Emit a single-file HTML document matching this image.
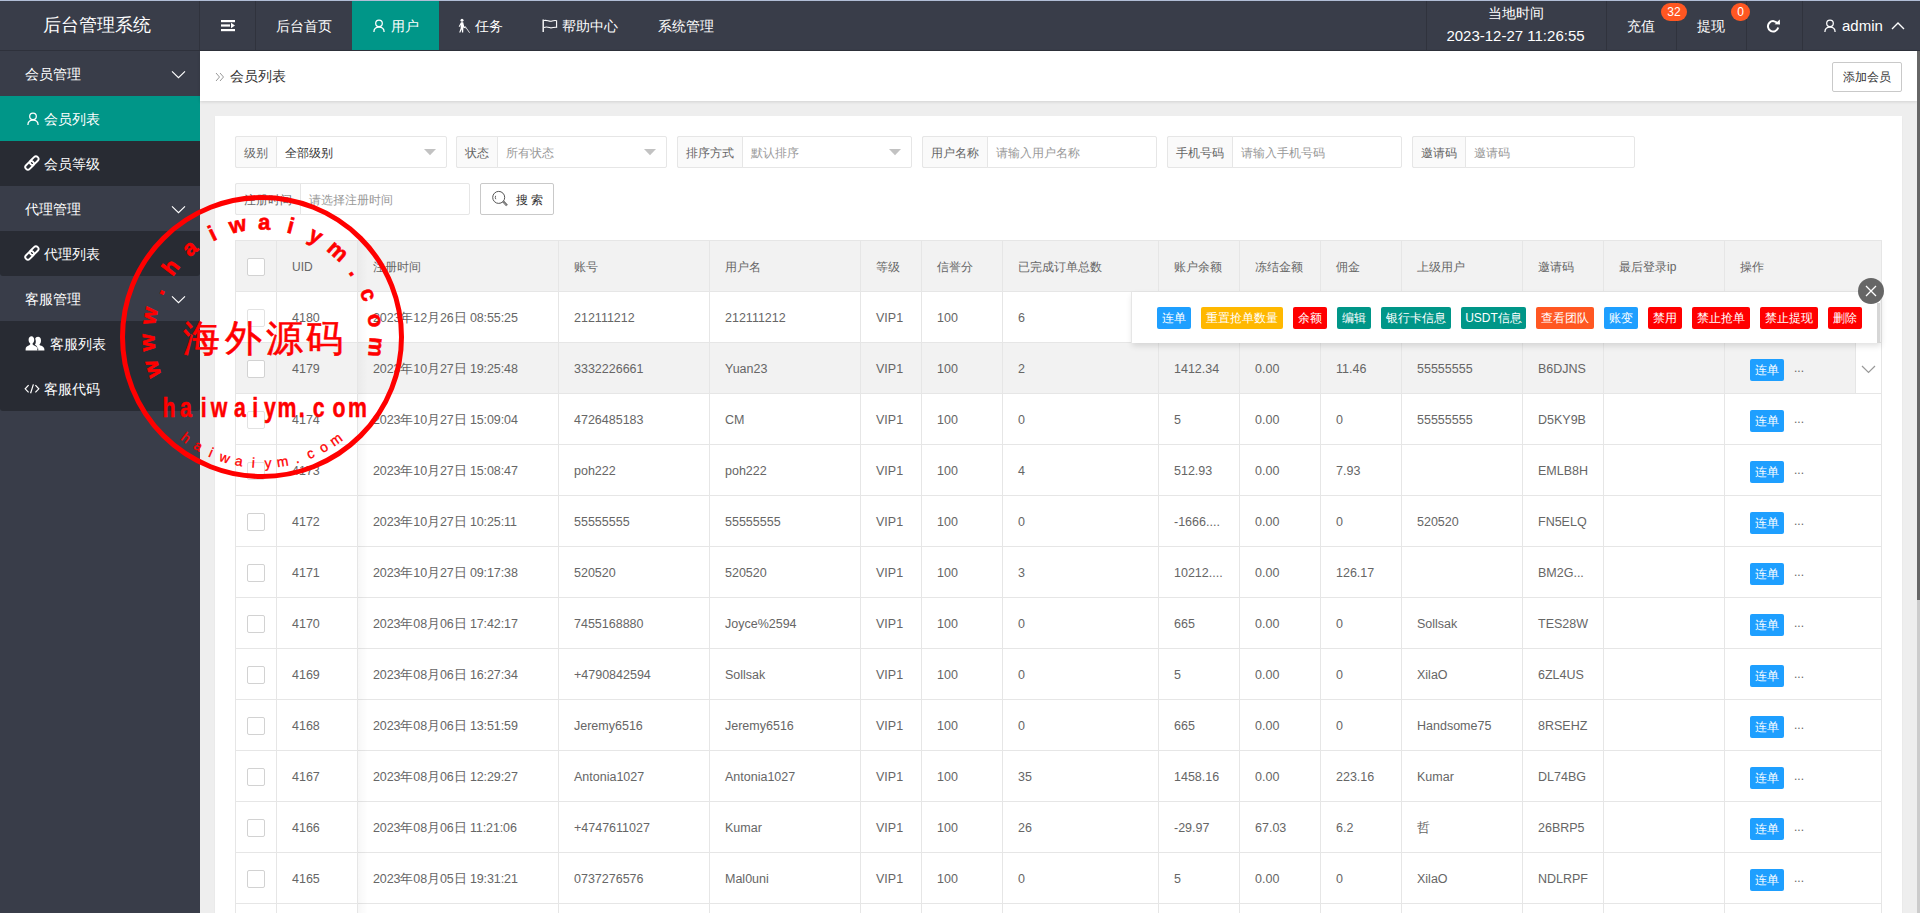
<!DOCTYPE html><html><head><meta charset="utf-8"><style>
html,body{margin:0;padding:0;} body{width:1920px;height:913px;overflow:hidden;position:relative;background:#eeeeee;font-family:"Liberation Sans", sans-serif;} div,svg{box-sizing:border-box;}
</style></head><body>
<div style="position:absolute;left:0px;top:0px;width:1920px;height:51px;background:#393D49;"></div>
<div style="position:absolute;left:0px;top:0px;width:1920px;height:1px;background:#b1bdd6;"></div>
<div style="position:absolute;left:0px;top:50px;width:1920px;height:1px;background:#2e313b;"></div>
<div style="position:absolute;left:199px;top:1px;width:1px;height:49px;background:#30333d;"></div>
<div style="position:absolute;left:255px;top:1px;width:1px;height:49px;background:#30333d;"></div>
<div style="position:absolute;left:1426px;top:1px;width:1px;height:49px;background:#30333d;"></div>
<div style="position:absolute;left:1606px;top:1px;width:1px;height:49px;background:#30333d;"></div>
<div style="position:absolute;left:1676px;top:1px;width:1px;height:49px;background:#30333d;"></div>
<div style="position:absolute;left:1746px;top:1px;width:1px;height:49px;background:#30333d;"></div>
<div style="position:absolute;left:1802px;top:1px;width:1px;height:49px;background:#30333d;"></div>
<div style="position:absolute;left:43px;top:13.0px;line-height:24px;font-size:18px;color:#fff;white-space:nowrap;">后台管理系统</div>
<svg style="position:absolute;left:221px;top:19px;" width="15" height="13" viewBox="0 0 15 13"><rect x="0" y="1" width="14" height="2.2" fill="#fff"/><rect x="0" y="5.4" width="9" height="2.2" fill="#fff"/><path d="M10 3.8 L14 6.5 L10 9.2 Z" fill="#fff"/><rect x="0" y="10" width="14" height="2.2" fill="#fff"/></svg>
<div style="position:absolute;left:276px;top:16.0px;line-height:20px;font-size:14px;color:#fff;white-space:nowrap;">后台首页</div>
<div style="position:absolute;left:352px;top:1px;width:87px;height:49px;background:#009688;"></div>
<svg style="position:absolute;left:373px;top:19px;" width="13" height="14" viewBox="0 0 13 14"><circle cx="6" cy="4.3" r="3.3" fill="none" stroke="#fff" stroke-width="1.25"/><path d="M0.9 13 C0.9 9.7 3.2 8.1 6 8.1 C8.8 8.1 11.1 9.7 11.1 13" fill="none" stroke="#fff" stroke-width="1.25"/></svg>
<div style="position:absolute;left:391px;top:16.0px;line-height:20px;font-size:14px;color:#fff;white-space:nowrap;">用户</div>
<svg style="position:absolute;left:457px;top:18px;" width="14" height="16" viewBox="0 0 14 16"><circle cx="5" cy="2.2" r="1.5" fill="#fff"/><path d="M4 4.3 L6.2 4.3 L7.2 8.6 L8.8 9.6 L8.4 10.4 L6.4 9.4 L6.2 14.6 L5 14.6 L4.7 11.2 L3.4 14.6 L2.2 14.6 L3.7 10 L3.5 6.8 L2.6 9 L1.7 8.6 Z" fill="#fff"/><path d="M8 8.2 L12.6 14.8" stroke="#fff" stroke-width="0.8"/></svg>
<div style="position:absolute;left:475px;top:16.0px;line-height:20px;font-size:14px;color:#fff;white-space:nowrap;">任务</div>
<svg style="position:absolute;left:542px;top:19px;" width="16" height="14" viewBox="0 0 16 14"><path d="M1.2 0.5 L1.2 13" stroke="#fff" stroke-width="1.4"/><path d="M2 1.6 C5 0.4 7 3.2 10 2.1 C12 1.4 13.5 1.5 14.6 1.7 L14.6 8.3 C12 7.6 10 9.6 7.5 8.6 C5 7.6 3.5 7.8 2 8.4" fill="none" stroke="#fff" stroke-width="1.1"/></svg>
<div style="position:absolute;left:562px;top:16.0px;line-height:20px;font-size:14px;color:#fff;white-space:nowrap;">帮助中心</div>
<div style="position:absolute;left:658px;top:16.0px;line-height:20px;font-size:14px;color:#fff;white-space:nowrap;">系统管理</div>
<div style="position:absolute;left:1366.0px;top:3.0px;width:300px;text-align:center;line-height:20px;font-size:14px;color:#fff;white-space:nowrap;">当地时间</div>
<div style="position:absolute;left:1365.5px;top:26.0px;width:300px;text-align:center;line-height:20px;font-size:15px;color:#fff;white-space:nowrap;">2023-12-27 11:26:55</div>
<div style="position:absolute;left:1627px;top:16.0px;line-height:20px;font-size:14px;color:#fff;white-space:nowrap;">充值</div>
<div style="position:absolute;left:1661px;top:3px;width:26px;height:18px;background:#FF5722;border-radius:9px;"></div>
<div style="position:absolute;left:1661.0px;top:5.0px;width:26px;text-align:center;line-height:14px;font-size:12px;color:#fff;white-space:nowrap;">32</div>
<div style="position:absolute;left:1697px;top:16.0px;line-height:20px;font-size:14px;color:#fff;white-space:nowrap;">提现</div>
<div style="position:absolute;left:1731px;top:3px;width:19px;height:18px;background:#FF5722;border-radius:9px;"></div>
<div style="position:absolute;left:1731.0px;top:5.0px;width:19px;text-align:center;line-height:14px;font-size:12px;color:#fff;white-space:nowrap;">0</div>
<svg style="position:absolute;left:1766px;top:19px;" width="16" height="14" viewBox="0 0 16 14"><path d="M11.6 4.6 A5.2 5.2 0 1 0 12.2 8.6" fill="none" stroke="#fff" stroke-width="2"/><path d="M8.6 5.2 L14 5.6 L13.8 0.4 Z" fill="#fff"/></svg>
<svg style="position:absolute;left:1824px;top:19px;" width="13" height="14" viewBox="0 0 13 14"><circle cx="6" cy="4.3" r="3.3" fill="none" stroke="#fff" stroke-width="1.25"/><path d="M0.9 13 C0.9 9.7 3.2 8.1 6 8.1 C8.8 8.1 11.1 9.7 11.1 13" fill="none" stroke="#fff" stroke-width="1.25"/></svg>
<div style="position:absolute;left:1842px;top:16.0px;line-height:20px;font-size:15px;color:#fff;white-space:nowrap;">admin</div>
<svg style="position:absolute;left:1891px;top:21px;" width="14" height="9" viewBox="0 0 14 9"><path d="M1 8 L7 2 L13 8" fill="none" stroke="#fff" stroke-width="1.4"/></svg>
<div style="position:absolute;left:0px;top:51px;width:200px;height:862px;background:#393D49;"></div>
<div style="position:absolute;left:25px;top:64.0px;line-height:20px;font-size:14px;color:#fff;white-space:nowrap;">会员管理</div>
<svg style="position:absolute;left:171px;top:70px;" width="15" height="9" viewBox="0 0 15 9"><path d="M1 1.3 L7.5 7.6 L14 1.3" fill="none" stroke="#fff" stroke-width="1.15"/></svg>
<div style="position:absolute;left:0px;top:96px;width:200px;height:45px;background:#009688;"></div>
<svg style="position:absolute;left:27px;top:112px;" width="13" height="14" viewBox="0 0 13 14"><circle cx="6" cy="4.3" r="3.3" fill="none" stroke="#fff" stroke-width="1.25"/><path d="M0.9 13 C0.9 9.7 3.2 8.1 6 8.1 C8.8 8.1 11.1 9.7 11.1 13" fill="none" stroke="#fff" stroke-width="1.25"/></svg>
<div style="position:absolute;left:44px;top:109.0px;line-height:20px;font-size:14px;color:#fff;white-space:nowrap;">会员列表</div>
<div style="position:absolute;left:0px;top:141px;width:200px;height:45px;background:#282B33;"></div>
<svg style="position:absolute;left:24px;top:155px;" width="16" height="16" viewBox="0 0 16 16"><g fill="none" stroke="#fff" stroke-width="1.9"><rect x="-5" y="-2.6" width="10" height="5.2" rx="2.6" transform="translate(10.2 5.6) rotate(-45)"/><rect x="-5" y="-2.6" width="10" height="5.2" rx="2.6" transform="translate(5.6 10.4) rotate(-45)"/></g></svg>
<div style="position:absolute;left:44px;top:154.0px;line-height:20px;font-size:14px;color:#fff;white-space:nowrap;">会员等级</div>
<div style="position:absolute;left:25px;top:199.0px;line-height:20px;font-size:14px;color:#fff;white-space:nowrap;">代理管理</div>
<svg style="position:absolute;left:171px;top:205px;" width="15" height="9" viewBox="0 0 15 9"><path d="M1 1.3 L7.5 7.6 L14 1.3" fill="none" stroke="#fff" stroke-width="1.15"/></svg>
<div style="position:absolute;left:0px;top:231px;width:200px;height:45px;background:#282B33;border-radius:0 0 3px 3px;"></div>
<svg style="position:absolute;left:24px;top:245px;" width="16" height="16" viewBox="0 0 16 16"><g fill="none" stroke="#fff" stroke-width="1.9"><rect x="-5" y="-2.6" width="10" height="5.2" rx="2.6" transform="translate(10.2 5.6) rotate(-45)"/><rect x="-5" y="-2.6" width="10" height="5.2" rx="2.6" transform="translate(5.6 10.4) rotate(-45)"/></g></svg>
<div style="position:absolute;left:44px;top:244.0px;line-height:20px;font-size:14px;color:#fff;white-space:nowrap;">代理列表</div>
<div style="position:absolute;left:25px;top:289.0px;line-height:20px;font-size:14px;color:#fff;white-space:nowrap;">客服管理</div>
<svg style="position:absolute;left:171px;top:295px;" width="15" height="9" viewBox="0 0 15 9"><path d="M1 1.3 L7.5 7.6 L14 1.3" fill="none" stroke="#fff" stroke-width="1.15"/></svg>
<div style="position:absolute;left:0px;top:321px;width:200px;height:90px;background:#282B33;border-radius:0 0 3px 3px;"></div>
<svg style="position:absolute;left:25px;top:336px;" width="20" height="15" viewBox="0 0 20 15"><path d="M12.6 14.6 L19.4 14.6 L19.4 13.4 C19.4 11.2 17.6 10.4 15.6 9.6 C14.8 9.3 14.4 8.8 14.6 8.2 C15.6 7.4 16 6 16 4.4 C16 2.2 14.8 0.8 13 0.8 C11.6 0.8 10.6 1.6 10.2 2.8 C10.6 3.6 10.8 4.4 10.8 5.4 C10.8 6.8 10.4 8 9.8 8.8 C11.8 9.8 12.6 11 12.6 13.2 Z" fill="#fff"/><path d="M0.6 14.6 L12.6 14.6 L12.6 13.2 C12.6 11 10.8 10 8.6 9.2 C7.8 8.9 7.4 8.4 7.6 7.6 C8.6 6.8 9.2 5.4 9.2 3.8 C9.2 1.6 7.8 0.2 6.6 0.2 C4.8 0.2 3.6 1.6 3.6 3.8 C3.6 5.4 4.2 6.8 5.2 7.6 C5.4 8.4 5 8.9 4.2 9.2 C2 10 0.6 11 0.6 13.2 Z" fill="#fff"/><path d="M12.8 14.6 L12.8 12.6" stroke="#282B33" stroke-width="0.8"/></svg>
<div style="position:absolute;left:50px;top:334.0px;line-height:20px;font-size:14px;color:#fff;white-space:nowrap;">客服列表</div>
<svg style="position:absolute;left:24px;top:384px;" width="16" height="10" viewBox="0 0 16 10"><g fill="none" stroke="#fff" stroke-width="1.2"><path d="M4.6 1.2 L1.2 4.8 L4.6 8.4"/><path d="M11.4 1.2 L14.8 4.8 L11.4 8.4"/><path d="M9.4 0.4 L6.6 9.2"/></g></svg>
<div style="position:absolute;left:44px;top:379.0px;line-height:20px;font-size:14px;color:#fff;white-space:nowrap;">客服代码</div>
<div style="position:absolute;left:200px;top:51px;width:1717px;height:50px;background:#fff;box-shadow:0 1px 3px rgba(0,0,0,.12);"></div>
<svg style="position:absolute;left:215px;top:72px;" width="10" height="10" viewBox="0 0 10 10"><g fill="none" stroke="#999" stroke-width="1"><path d="M1 1 L4.5 5 L1 9"/><path d="M5 1 L8.5 5 L5 9"/></g></svg>
<div style="position:absolute;left:230px;top:66.0px;line-height:20px;font-size:14px;color:#333;white-space:nowrap;">会员列表</div>
<div style="position:absolute;left:1832px;top:62px;width:70px;height:30px;background:#fff;border:1px solid #C9C9C9;border-radius:2px;"></div>
<div style="position:absolute;left:1832.0px;top:67.0px;width:70px;text-align:center;line-height:20px;font-size:12px;color:#333;white-space:nowrap;">添加会员</div>
<div style="position:absolute;left:215px;top:116px;width:1687px;height:800px;background:#fff;box-shadow:0 1px 2px rgba(0,0,0,.05);"></div>
<div style="position:absolute;left:235px;top:136px;width:212px;height:32px;border:1px solid #e6e6e6;border-radius:2px;background:#fff;"></div>
<div style="position:absolute;left:235px;top:136px;width:42px;height:32px;border:1px solid #e6e6e6;border-radius:2px 0 0 2px;background:#FAFAFA;"></div>
<div style="position:absolute;left:244px;top:142.5px;line-height:20px;font-size:12px;color:#666;white-space:nowrap;">级别</div>
<div style="position:absolute;left:285px;top:142.5px;line-height:20px;font-size:12px;color:#333;white-space:nowrap;">全部级别</div>
<svg style="position:absolute;left:424px;top:149.0px;" width="13" height="7" viewBox="0 0 13 7"><path d="M0 0 L12 0 L6 6.2 Z" fill="#c2c2c2"/></svg>
<div style="position:absolute;left:456px;top:136px;width:211px;height:32px;border:1px solid #e6e6e6;border-radius:2px;background:#fff;"></div>
<div style="position:absolute;left:456px;top:136px;width:42px;height:32px;border:1px solid #e6e6e6;border-radius:2px 0 0 2px;background:#FAFAFA;"></div>
<div style="position:absolute;left:465px;top:142.5px;line-height:20px;font-size:12px;color:#666;white-space:nowrap;">状态</div>
<div style="position:absolute;left:506px;top:142.5px;line-height:20px;font-size:12px;color:#999;white-space:nowrap;">所有状态</div>
<svg style="position:absolute;left:644px;top:149.0px;" width="13" height="7" viewBox="0 0 13 7"><path d="M0 0 L12 0 L6 6.2 Z" fill="#c2c2c2"/></svg>
<div style="position:absolute;left:677px;top:136px;width:235px;height:32px;border:1px solid #e6e6e6;border-radius:2px;background:#fff;"></div>
<div style="position:absolute;left:677px;top:136px;width:66px;height:32px;border:1px solid #e6e6e6;border-radius:2px 0 0 2px;background:#FAFAFA;"></div>
<div style="position:absolute;left:686px;top:142.5px;line-height:20px;font-size:12px;color:#666;white-space:nowrap;">排序方式</div>
<div style="position:absolute;left:751px;top:142.5px;line-height:20px;font-size:12px;color:#999;white-space:nowrap;">默认排序</div>
<svg style="position:absolute;left:889px;top:149.0px;" width="13" height="7" viewBox="0 0 13 7"><path d="M0 0 L12 0 L6 6.2 Z" fill="#c2c2c2"/></svg>
<div style="position:absolute;left:922px;top:136px;width:235px;height:32px;border:1px solid #e6e6e6;border-radius:2px;background:#fff;"></div>
<div style="position:absolute;left:922px;top:136px;width:66px;height:32px;border:1px solid #e6e6e6;border-radius:2px 0 0 2px;background:#FAFAFA;"></div>
<div style="position:absolute;left:931px;top:142.5px;line-height:20px;font-size:12px;color:#666;white-space:nowrap;">用户名称</div>
<div style="position:absolute;left:996px;top:142.5px;line-height:20px;font-size:12px;color:#999;white-space:nowrap;">请输入用户名称</div>
<div style="position:absolute;left:1167px;top:136px;width:235px;height:32px;border:1px solid #e6e6e6;border-radius:2px;background:#fff;"></div>
<div style="position:absolute;left:1167px;top:136px;width:66px;height:32px;border:1px solid #e6e6e6;border-radius:2px 0 0 2px;background:#FAFAFA;"></div>
<div style="position:absolute;left:1176px;top:142.5px;line-height:20px;font-size:12px;color:#666;white-space:nowrap;">手机号码</div>
<div style="position:absolute;left:1241px;top:142.5px;line-height:20px;font-size:12px;color:#999;white-space:nowrap;">请输入手机号码</div>
<div style="position:absolute;left:1412px;top:136px;width:223px;height:32px;border:1px solid #e6e6e6;border-radius:2px;background:#fff;"></div>
<div style="position:absolute;left:1412px;top:136px;width:54px;height:32px;border:1px solid #e6e6e6;border-radius:2px 0 0 2px;background:#FAFAFA;"></div>
<div style="position:absolute;left:1421px;top:142.5px;line-height:20px;font-size:12px;color:#666;white-space:nowrap;">邀请码</div>
<div style="position:absolute;left:1474px;top:142.5px;line-height:20px;font-size:12px;color:#999;white-space:nowrap;">邀请码</div>
<div style="position:absolute;left:235px;top:183px;width:235px;height:32px;border:1px solid #e6e6e6;border-radius:2px;background:#fff;"></div>
<div style="position:absolute;left:235px;top:183px;width:66px;height:32px;border:1px solid #e6e6e6;border-radius:2px 0 0 2px;background:#FAFAFA;"></div>
<div style="position:absolute;left:244px;top:189.5px;line-height:20px;font-size:12px;color:#666;white-space:nowrap;">注册时间</div>
<div style="position:absolute;left:309px;top:189.5px;line-height:20px;font-size:12px;color:#999;white-space:nowrap;">请选择注册时间</div>
<div style="position:absolute;left:480px;top:183px;width:74px;height:32px;border:1px solid #C9C9C9;border-radius:2px;background:#fff;"></div>
<svg style="position:absolute;left:491px;top:189px;" width="18" height="19" viewBox="0 0 18 19"><circle cx="7.7" cy="8.4" r="6" fill="none" stroke="#555" stroke-width="1"/><path d="M12.2 12.6 L16 16.6" stroke="#555" stroke-width="2.2"/><path d="M12.4 13 L15.8 16.4" stroke="#fff" stroke-width="0.6"/><path d="M4.6 6.8 A3.8 3.8 0 0 0 4.8 10.2" fill="none" stroke="#555" stroke-width="0.9"/></svg>
<div style="position:absolute;left:515.5px;top:190.0px;line-height:20px;font-size:12px;color:#333;white-space:nowrap;">搜</div>
<div style="position:absolute;left:531px;top:190.0px;line-height:20px;font-size:12px;color:#333;white-space:nowrap;">索</div>
<div style="position:absolute;left:235px;top:240px;width:1647px;height:51px;background:#f2f2f2;"></div>
<div style="position:absolute;left:235px;top:342px;width:1647px;height:51px;background:#f2f2f2;"></div>
<div style="position:absolute;left:235px;top:240px;width:1647px;height:1px;background:#e6e6e6;"></div>
<div style="position:absolute;left:235px;top:291px;width:1647px;height:1px;background:#e6e6e6;"></div>
<div style="position:absolute;left:235px;top:342px;width:1647px;height:1px;background:#e6e6e6;"></div>
<div style="position:absolute;left:235px;top:393px;width:1647px;height:1px;background:#e6e6e6;"></div>
<div style="position:absolute;left:235px;top:444px;width:1647px;height:1px;background:#e6e6e6;"></div>
<div style="position:absolute;left:235px;top:495px;width:1647px;height:1px;background:#e6e6e6;"></div>
<div style="position:absolute;left:235px;top:546px;width:1647px;height:1px;background:#e6e6e6;"></div>
<div style="position:absolute;left:235px;top:597px;width:1647px;height:1px;background:#e6e6e6;"></div>
<div style="position:absolute;left:235px;top:648px;width:1647px;height:1px;background:#e6e6e6;"></div>
<div style="position:absolute;left:235px;top:699px;width:1647px;height:1px;background:#e6e6e6;"></div>
<div style="position:absolute;left:235px;top:750px;width:1647px;height:1px;background:#e6e6e6;"></div>
<div style="position:absolute;left:235px;top:801px;width:1647px;height:1px;background:#e6e6e6;"></div>
<div style="position:absolute;left:235px;top:852px;width:1647px;height:1px;background:#e6e6e6;"></div>
<div style="position:absolute;left:235px;top:903px;width:1647px;height:1px;background:#e6e6e6;"></div>
<div style="position:absolute;left:235px;top:240px;width:1px;height:700px;background:#e6e6e6;"></div>
<div style="position:absolute;left:276px;top:240px;width:1px;height:700px;background:#e6e6e6;"></div>
<div style="position:absolute;left:357px;top:240px;width:1px;height:700px;background:#e6e6e6;"></div>
<div style="position:absolute;left:558px;top:240px;width:1px;height:700px;background:#e6e6e6;"></div>
<div style="position:absolute;left:709px;top:240px;width:1px;height:700px;background:#e6e6e6;"></div>
<div style="position:absolute;left:860px;top:240px;width:1px;height:700px;background:#e6e6e6;"></div>
<div style="position:absolute;left:921px;top:240px;width:1px;height:700px;background:#e6e6e6;"></div>
<div style="position:absolute;left:1002px;top:240px;width:1px;height:700px;background:#e6e6e6;"></div>
<div style="position:absolute;left:1158px;top:240px;width:1px;height:700px;background:#e6e6e6;"></div>
<div style="position:absolute;left:1239px;top:240px;width:1px;height:700px;background:#e6e6e6;"></div>
<div style="position:absolute;left:1320px;top:240px;width:1px;height:700px;background:#e6e6e6;"></div>
<div style="position:absolute;left:1401px;top:240px;width:1px;height:700px;background:#e6e6e6;"></div>
<div style="position:absolute;left:1522px;top:240px;width:1px;height:700px;background:#e6e6e6;"></div>
<div style="position:absolute;left:1603px;top:240px;width:1px;height:700px;background:#e6e6e6;"></div>
<div style="position:absolute;left:1724px;top:240px;width:1px;height:700px;background:#e6e6e6;"></div>
<div style="position:absolute;left:1881px;top:240px;width:1px;height:700px;background:#e6e6e6;"></div>
<div style="position:absolute;left:358px;top:240px;width:10px;height:700px;background:linear-gradient(to right, rgba(0,0,0,.03), rgba(0,0,0,0));"></div>
<div style="position:absolute;left:247px;top:258px;width:18px;height:18px;background:#fff;border:1px solid #d2d2d2;border-radius:2px;"></div>
<div style="position:absolute;left:292px;top:257.0px;line-height:20px;font-size:12px;color:#666;white-space:nowrap;font-size:12px;">UID</div>
<div style="position:absolute;left:373px;top:257.0px;line-height:20px;font-size:12px;color:#666;white-space:nowrap;font-size:12px;">注册时间</div>
<div style="position:absolute;left:574px;top:257.0px;line-height:20px;font-size:12px;color:#666;white-space:nowrap;font-size:12px;">账号</div>
<div style="position:absolute;left:725px;top:257.0px;line-height:20px;font-size:12px;color:#666;white-space:nowrap;font-size:12px;">用户名</div>
<div style="position:absolute;left:876px;top:257.0px;line-height:20px;font-size:12px;color:#666;white-space:nowrap;font-size:12px;">等级</div>
<div style="position:absolute;left:937px;top:257.0px;line-height:20px;font-size:12px;color:#666;white-space:nowrap;font-size:12px;">信誉分</div>
<div style="position:absolute;left:1018px;top:257.0px;line-height:20px;font-size:12px;color:#666;white-space:nowrap;font-size:12px;">已完成订单总数</div>
<div style="position:absolute;left:1174px;top:257.0px;line-height:20px;font-size:12px;color:#666;white-space:nowrap;font-size:12px;">账户余额</div>
<div style="position:absolute;left:1255px;top:257.0px;line-height:20px;font-size:12px;color:#666;white-space:nowrap;font-size:12px;">冻结金额</div>
<div style="position:absolute;left:1336px;top:257.0px;line-height:20px;font-size:12px;color:#666;white-space:nowrap;font-size:12px;">佣金</div>
<div style="position:absolute;left:1417px;top:257.0px;line-height:20px;font-size:12px;color:#666;white-space:nowrap;font-size:12px;">上级用户</div>
<div style="position:absolute;left:1538px;top:257.0px;line-height:20px;font-size:12px;color:#666;white-space:nowrap;font-size:12px;">邀请码</div>
<div style="position:absolute;left:1619px;top:257.0px;line-height:20px;font-size:12px;color:#666;white-space:nowrap;font-size:12px;">最后登录ip</div>
<div style="position:absolute;left:1740px;top:257.0px;line-height:20px;font-size:12px;color:#666;white-space:nowrap;font-size:12px;">操作</div>
<div style="position:absolute;left:247px;top:309px;width:18px;height:18px;background:#fff;border:1px solid #e2e2e2;border-radius:2px;"></div>
<div style="position:absolute;left:292px;top:308.0px;line-height:20px;font-size:12.5px;color:#666;white-space:nowrap;">4180</div>
<div style="position:absolute;left:373px;top:308.0px;line-height:20px;font-size:12.5px;color:#666;white-space:nowrap;letter-spacing:-0.1px;">2023年12月26日 08:55:25</div>
<div style="position:absolute;left:574px;top:308.0px;line-height:20px;font-size:12.5px;color:#666;white-space:nowrap;">212111212</div>
<div style="position:absolute;left:725px;top:308.0px;line-height:20px;font-size:12.5px;color:#666;white-space:nowrap;">212111212</div>
<div style="position:absolute;left:876px;top:308.0px;line-height:20px;font-size:12.5px;color:#666;white-space:nowrap;">VIP1</div>
<div style="position:absolute;left:937px;top:308.0px;line-height:20px;font-size:12.5px;color:#666;white-space:nowrap;">100</div>
<div style="position:absolute;left:1018px;top:308.0px;line-height:20px;font-size:12.5px;color:#666;white-space:nowrap;">6</div>
<div style="position:absolute;left:1750px;top:308px;width:34px;height:22px;background:#1E9FFF;border-radius:2px;"></div>
<div style="position:absolute;left:1750.0px;top:309.0px;width:34px;text-align:center;line-height:20px;font-size:12px;color:#fff;white-space:nowrap;">连单</div>
<div style="position:absolute;left:1794px;top:307.0px;line-height:20px;font-size:12px;color:#666;white-space:nowrap;">...</div>
<div style="position:absolute;left:247px;top:360px;width:18px;height:18px;background:#fff;border:1px solid #d2d2d2;border-radius:2px;"></div>
<div style="position:absolute;left:292px;top:359.0px;line-height:20px;font-size:12.5px;color:#666;white-space:nowrap;">4179</div>
<div style="position:absolute;left:373px;top:359.0px;line-height:20px;font-size:12.5px;color:#666;white-space:nowrap;letter-spacing:-0.1px;">2023年10月27日 19:25:48</div>
<div style="position:absolute;left:574px;top:359.0px;line-height:20px;font-size:12.5px;color:#666;white-space:nowrap;">3332226661</div>
<div style="position:absolute;left:725px;top:359.0px;line-height:20px;font-size:12.5px;color:#666;white-space:nowrap;">Yuan23</div>
<div style="position:absolute;left:876px;top:359.0px;line-height:20px;font-size:12.5px;color:#666;white-space:nowrap;">VIP1</div>
<div style="position:absolute;left:937px;top:359.0px;line-height:20px;font-size:12.5px;color:#666;white-space:nowrap;">100</div>
<div style="position:absolute;left:1018px;top:359.0px;line-height:20px;font-size:12.5px;color:#666;white-space:nowrap;">2</div>
<div style="position:absolute;left:1174px;top:359.0px;line-height:20px;font-size:12.5px;color:#666;white-space:nowrap;">1412.34</div>
<div style="position:absolute;left:1255px;top:359.0px;line-height:20px;font-size:12.5px;color:#666;white-space:nowrap;">0.00</div>
<div style="position:absolute;left:1336px;top:359.0px;line-height:20px;font-size:12.5px;color:#666;white-space:nowrap;">11.46</div>
<div style="position:absolute;left:1417px;top:359.0px;line-height:20px;font-size:12.5px;color:#666;white-space:nowrap;">55555555</div>
<div style="position:absolute;left:1538px;top:359.0px;line-height:20px;font-size:12.5px;color:#666;white-space:nowrap;">B6DJNS</div>
<div style="position:absolute;left:1750px;top:359px;width:34px;height:22px;background:#1E9FFF;border-radius:2px;"></div>
<div style="position:absolute;left:1750.0px;top:360.0px;width:34px;text-align:center;line-height:20px;font-size:12px;color:#fff;white-space:nowrap;">连单</div>
<div style="position:absolute;left:1794px;top:358.0px;line-height:20px;font-size:12px;color:#666;white-space:nowrap;">...</div>
<div style="position:absolute;left:247px;top:411px;width:18px;height:18px;background:#fff;border:1px solid #e2e2e2;border-radius:2px;"></div>
<div style="position:absolute;left:292px;top:410.0px;line-height:20px;font-size:12.5px;color:#666;white-space:nowrap;">4174</div>
<div style="position:absolute;left:373px;top:410.0px;line-height:20px;font-size:12.5px;color:#666;white-space:nowrap;letter-spacing:-0.1px;">2023年10月27日 15:09:04</div>
<div style="position:absolute;left:574px;top:410.0px;line-height:20px;font-size:12.5px;color:#666;white-space:nowrap;">4726485183</div>
<div style="position:absolute;left:725px;top:410.0px;line-height:20px;font-size:12.5px;color:#666;white-space:nowrap;">CM</div>
<div style="position:absolute;left:876px;top:410.0px;line-height:20px;font-size:12.5px;color:#666;white-space:nowrap;">VIP1</div>
<div style="position:absolute;left:937px;top:410.0px;line-height:20px;font-size:12.5px;color:#666;white-space:nowrap;">100</div>
<div style="position:absolute;left:1018px;top:410.0px;line-height:20px;font-size:12.5px;color:#666;white-space:nowrap;">0</div>
<div style="position:absolute;left:1174px;top:410.0px;line-height:20px;font-size:12.5px;color:#666;white-space:nowrap;">5</div>
<div style="position:absolute;left:1255px;top:410.0px;line-height:20px;font-size:12.5px;color:#666;white-space:nowrap;">0.00</div>
<div style="position:absolute;left:1336px;top:410.0px;line-height:20px;font-size:12.5px;color:#666;white-space:nowrap;">0</div>
<div style="position:absolute;left:1417px;top:410.0px;line-height:20px;font-size:12.5px;color:#666;white-space:nowrap;">55555555</div>
<div style="position:absolute;left:1538px;top:410.0px;line-height:20px;font-size:12.5px;color:#666;white-space:nowrap;">D5KY9B</div>
<div style="position:absolute;left:1750px;top:410px;width:34px;height:22px;background:#1E9FFF;border-radius:2px;"></div>
<div style="position:absolute;left:1750.0px;top:411.0px;width:34px;text-align:center;line-height:20px;font-size:12px;color:#fff;white-space:nowrap;">连单</div>
<div style="position:absolute;left:1794px;top:409.0px;line-height:20px;font-size:12px;color:#666;white-space:nowrap;">...</div>
<div style="position:absolute;left:247px;top:462px;width:18px;height:18px;background:#fff;border:1px solid #e2e2e2;border-radius:2px;"></div>
<div style="position:absolute;left:292px;top:461.0px;line-height:20px;font-size:12.5px;color:#666;white-space:nowrap;">4173</div>
<div style="position:absolute;left:373px;top:461.0px;line-height:20px;font-size:12.5px;color:#666;white-space:nowrap;letter-spacing:-0.1px;">2023年10月27日 15:08:47</div>
<div style="position:absolute;left:574px;top:461.0px;line-height:20px;font-size:12.5px;color:#666;white-space:nowrap;">poh222</div>
<div style="position:absolute;left:725px;top:461.0px;line-height:20px;font-size:12.5px;color:#666;white-space:nowrap;">poh222</div>
<div style="position:absolute;left:876px;top:461.0px;line-height:20px;font-size:12.5px;color:#666;white-space:nowrap;">VIP1</div>
<div style="position:absolute;left:937px;top:461.0px;line-height:20px;font-size:12.5px;color:#666;white-space:nowrap;">100</div>
<div style="position:absolute;left:1018px;top:461.0px;line-height:20px;font-size:12.5px;color:#666;white-space:nowrap;">4</div>
<div style="position:absolute;left:1174px;top:461.0px;line-height:20px;font-size:12.5px;color:#666;white-space:nowrap;">512.93</div>
<div style="position:absolute;left:1255px;top:461.0px;line-height:20px;font-size:12.5px;color:#666;white-space:nowrap;">0.00</div>
<div style="position:absolute;left:1336px;top:461.0px;line-height:20px;font-size:12.5px;color:#666;white-space:nowrap;">7.93</div>
<div style="position:absolute;left:1538px;top:461.0px;line-height:20px;font-size:12.5px;color:#666;white-space:nowrap;">EMLB8H</div>
<div style="position:absolute;left:1750px;top:461px;width:34px;height:22px;background:#1E9FFF;border-radius:2px;"></div>
<div style="position:absolute;left:1750.0px;top:462.0px;width:34px;text-align:center;line-height:20px;font-size:12px;color:#fff;white-space:nowrap;">连单</div>
<div style="position:absolute;left:1794px;top:460.0px;line-height:20px;font-size:12px;color:#666;white-space:nowrap;">...</div>
<div style="position:absolute;left:247px;top:513px;width:18px;height:18px;background:#fff;border:1px solid #d2d2d2;border-radius:2px;"></div>
<div style="position:absolute;left:292px;top:512.0px;line-height:20px;font-size:12.5px;color:#666;white-space:nowrap;">4172</div>
<div style="position:absolute;left:373px;top:512.0px;line-height:20px;font-size:12.5px;color:#666;white-space:nowrap;letter-spacing:-0.1px;">2023年10月27日 10:25:11</div>
<div style="position:absolute;left:574px;top:512.0px;line-height:20px;font-size:12.5px;color:#666;white-space:nowrap;">55555555</div>
<div style="position:absolute;left:725px;top:512.0px;line-height:20px;font-size:12.5px;color:#666;white-space:nowrap;">55555555</div>
<div style="position:absolute;left:876px;top:512.0px;line-height:20px;font-size:12.5px;color:#666;white-space:nowrap;">VIP1</div>
<div style="position:absolute;left:937px;top:512.0px;line-height:20px;font-size:12.5px;color:#666;white-space:nowrap;">100</div>
<div style="position:absolute;left:1018px;top:512.0px;line-height:20px;font-size:12.5px;color:#666;white-space:nowrap;">0</div>
<div style="position:absolute;left:1174px;top:512.0px;line-height:20px;font-size:12.5px;color:#666;white-space:nowrap;">-1666....</div>
<div style="position:absolute;left:1255px;top:512.0px;line-height:20px;font-size:12.5px;color:#666;white-space:nowrap;">0.00</div>
<div style="position:absolute;left:1336px;top:512.0px;line-height:20px;font-size:12.5px;color:#666;white-space:nowrap;">0</div>
<div style="position:absolute;left:1417px;top:512.0px;line-height:20px;font-size:12.5px;color:#666;white-space:nowrap;">520520</div>
<div style="position:absolute;left:1538px;top:512.0px;line-height:20px;font-size:12.5px;color:#666;white-space:nowrap;">FN5ELQ</div>
<div style="position:absolute;left:1750px;top:512px;width:34px;height:22px;background:#1E9FFF;border-radius:2px;"></div>
<div style="position:absolute;left:1750.0px;top:513.0px;width:34px;text-align:center;line-height:20px;font-size:12px;color:#fff;white-space:nowrap;">连单</div>
<div style="position:absolute;left:1794px;top:511.0px;line-height:20px;font-size:12px;color:#666;white-space:nowrap;">...</div>
<div style="position:absolute;left:247px;top:564px;width:18px;height:18px;background:#fff;border:1px solid #d2d2d2;border-radius:2px;"></div>
<div style="position:absolute;left:292px;top:563.0px;line-height:20px;font-size:12.5px;color:#666;white-space:nowrap;">4171</div>
<div style="position:absolute;left:373px;top:563.0px;line-height:20px;font-size:12.5px;color:#666;white-space:nowrap;letter-spacing:-0.1px;">2023年10月27日 09:17:38</div>
<div style="position:absolute;left:574px;top:563.0px;line-height:20px;font-size:12.5px;color:#666;white-space:nowrap;">520520</div>
<div style="position:absolute;left:725px;top:563.0px;line-height:20px;font-size:12.5px;color:#666;white-space:nowrap;">520520</div>
<div style="position:absolute;left:876px;top:563.0px;line-height:20px;font-size:12.5px;color:#666;white-space:nowrap;">VIP1</div>
<div style="position:absolute;left:937px;top:563.0px;line-height:20px;font-size:12.5px;color:#666;white-space:nowrap;">100</div>
<div style="position:absolute;left:1018px;top:563.0px;line-height:20px;font-size:12.5px;color:#666;white-space:nowrap;">3</div>
<div style="position:absolute;left:1174px;top:563.0px;line-height:20px;font-size:12.5px;color:#666;white-space:nowrap;">10212....</div>
<div style="position:absolute;left:1255px;top:563.0px;line-height:20px;font-size:12.5px;color:#666;white-space:nowrap;">0.00</div>
<div style="position:absolute;left:1336px;top:563.0px;line-height:20px;font-size:12.5px;color:#666;white-space:nowrap;">126.17</div>
<div style="position:absolute;left:1538px;top:563.0px;line-height:20px;font-size:12.5px;color:#666;white-space:nowrap;">BM2G...</div>
<div style="position:absolute;left:1750px;top:563px;width:34px;height:22px;background:#1E9FFF;border-radius:2px;"></div>
<div style="position:absolute;left:1750.0px;top:564.0px;width:34px;text-align:center;line-height:20px;font-size:12px;color:#fff;white-space:nowrap;">连单</div>
<div style="position:absolute;left:1794px;top:562.0px;line-height:20px;font-size:12px;color:#666;white-space:nowrap;">...</div>
<div style="position:absolute;left:247px;top:615px;width:18px;height:18px;background:#fff;border:1px solid #d2d2d2;border-radius:2px;"></div>
<div style="position:absolute;left:292px;top:614.0px;line-height:20px;font-size:12.5px;color:#666;white-space:nowrap;">4170</div>
<div style="position:absolute;left:373px;top:614.0px;line-height:20px;font-size:12.5px;color:#666;white-space:nowrap;letter-spacing:-0.1px;">2023年08月06日 17:42:17</div>
<div style="position:absolute;left:574px;top:614.0px;line-height:20px;font-size:12.5px;color:#666;white-space:nowrap;">7455168880</div>
<div style="position:absolute;left:725px;top:614.0px;line-height:20px;font-size:12.5px;color:#666;white-space:nowrap;">Joyce%2594</div>
<div style="position:absolute;left:876px;top:614.0px;line-height:20px;font-size:12.5px;color:#666;white-space:nowrap;">VIP1</div>
<div style="position:absolute;left:937px;top:614.0px;line-height:20px;font-size:12.5px;color:#666;white-space:nowrap;">100</div>
<div style="position:absolute;left:1018px;top:614.0px;line-height:20px;font-size:12.5px;color:#666;white-space:nowrap;">0</div>
<div style="position:absolute;left:1174px;top:614.0px;line-height:20px;font-size:12.5px;color:#666;white-space:nowrap;">665</div>
<div style="position:absolute;left:1255px;top:614.0px;line-height:20px;font-size:12.5px;color:#666;white-space:nowrap;">0.00</div>
<div style="position:absolute;left:1336px;top:614.0px;line-height:20px;font-size:12.5px;color:#666;white-space:nowrap;">0</div>
<div style="position:absolute;left:1417px;top:614.0px;line-height:20px;font-size:12.5px;color:#666;white-space:nowrap;">Sollsak</div>
<div style="position:absolute;left:1538px;top:614.0px;line-height:20px;font-size:12.5px;color:#666;white-space:nowrap;">TES28W</div>
<div style="position:absolute;left:1750px;top:614px;width:34px;height:22px;background:#1E9FFF;border-radius:2px;"></div>
<div style="position:absolute;left:1750.0px;top:615.0px;width:34px;text-align:center;line-height:20px;font-size:12px;color:#fff;white-space:nowrap;">连单</div>
<div style="position:absolute;left:1794px;top:613.0px;line-height:20px;font-size:12px;color:#666;white-space:nowrap;">...</div>
<div style="position:absolute;left:247px;top:666px;width:18px;height:18px;background:#fff;border:1px solid #d2d2d2;border-radius:2px;"></div>
<div style="position:absolute;left:292px;top:665.0px;line-height:20px;font-size:12.5px;color:#666;white-space:nowrap;">4169</div>
<div style="position:absolute;left:373px;top:665.0px;line-height:20px;font-size:12.5px;color:#666;white-space:nowrap;letter-spacing:-0.1px;">2023年08月06日 16:27:34</div>
<div style="position:absolute;left:574px;top:665.0px;line-height:20px;font-size:12.5px;color:#666;white-space:nowrap;">+4790842594</div>
<div style="position:absolute;left:725px;top:665.0px;line-height:20px;font-size:12.5px;color:#666;white-space:nowrap;">Sollsak</div>
<div style="position:absolute;left:876px;top:665.0px;line-height:20px;font-size:12.5px;color:#666;white-space:nowrap;">VIP1</div>
<div style="position:absolute;left:937px;top:665.0px;line-height:20px;font-size:12.5px;color:#666;white-space:nowrap;">100</div>
<div style="position:absolute;left:1018px;top:665.0px;line-height:20px;font-size:12.5px;color:#666;white-space:nowrap;">0</div>
<div style="position:absolute;left:1174px;top:665.0px;line-height:20px;font-size:12.5px;color:#666;white-space:nowrap;">5</div>
<div style="position:absolute;left:1255px;top:665.0px;line-height:20px;font-size:12.5px;color:#666;white-space:nowrap;">0.00</div>
<div style="position:absolute;left:1336px;top:665.0px;line-height:20px;font-size:12.5px;color:#666;white-space:nowrap;">0</div>
<div style="position:absolute;left:1417px;top:665.0px;line-height:20px;font-size:12.5px;color:#666;white-space:nowrap;">XilaO</div>
<div style="position:absolute;left:1538px;top:665.0px;line-height:20px;font-size:12.5px;color:#666;white-space:nowrap;">6ZL4US</div>
<div style="position:absolute;left:1750px;top:665px;width:34px;height:22px;background:#1E9FFF;border-radius:2px;"></div>
<div style="position:absolute;left:1750.0px;top:666.0px;width:34px;text-align:center;line-height:20px;font-size:12px;color:#fff;white-space:nowrap;">连单</div>
<div style="position:absolute;left:1794px;top:664.0px;line-height:20px;font-size:12px;color:#666;white-space:nowrap;">...</div>
<div style="position:absolute;left:247px;top:717px;width:18px;height:18px;background:#fff;border:1px solid #d2d2d2;border-radius:2px;"></div>
<div style="position:absolute;left:292px;top:716.0px;line-height:20px;font-size:12.5px;color:#666;white-space:nowrap;">4168</div>
<div style="position:absolute;left:373px;top:716.0px;line-height:20px;font-size:12.5px;color:#666;white-space:nowrap;letter-spacing:-0.1px;">2023年08月06日 13:51:59</div>
<div style="position:absolute;left:574px;top:716.0px;line-height:20px;font-size:12.5px;color:#666;white-space:nowrap;">Jeremy6516</div>
<div style="position:absolute;left:725px;top:716.0px;line-height:20px;font-size:12.5px;color:#666;white-space:nowrap;">Jeremy6516</div>
<div style="position:absolute;left:876px;top:716.0px;line-height:20px;font-size:12.5px;color:#666;white-space:nowrap;">VIP1</div>
<div style="position:absolute;left:937px;top:716.0px;line-height:20px;font-size:12.5px;color:#666;white-space:nowrap;">100</div>
<div style="position:absolute;left:1018px;top:716.0px;line-height:20px;font-size:12.5px;color:#666;white-space:nowrap;">0</div>
<div style="position:absolute;left:1174px;top:716.0px;line-height:20px;font-size:12.5px;color:#666;white-space:nowrap;">665</div>
<div style="position:absolute;left:1255px;top:716.0px;line-height:20px;font-size:12.5px;color:#666;white-space:nowrap;">0.00</div>
<div style="position:absolute;left:1336px;top:716.0px;line-height:20px;font-size:12.5px;color:#666;white-space:nowrap;">0</div>
<div style="position:absolute;left:1417px;top:716.0px;line-height:20px;font-size:12.5px;color:#666;white-space:nowrap;">Handsome75</div>
<div style="position:absolute;left:1538px;top:716.0px;line-height:20px;font-size:12.5px;color:#666;white-space:nowrap;">8RSEHZ</div>
<div style="position:absolute;left:1750px;top:716px;width:34px;height:22px;background:#1E9FFF;border-radius:2px;"></div>
<div style="position:absolute;left:1750.0px;top:717.0px;width:34px;text-align:center;line-height:20px;font-size:12px;color:#fff;white-space:nowrap;">连单</div>
<div style="position:absolute;left:1794px;top:715.0px;line-height:20px;font-size:12px;color:#666;white-space:nowrap;">...</div>
<div style="position:absolute;left:247px;top:768px;width:18px;height:18px;background:#fff;border:1px solid #d2d2d2;border-radius:2px;"></div>
<div style="position:absolute;left:292px;top:767.0px;line-height:20px;font-size:12.5px;color:#666;white-space:nowrap;">4167</div>
<div style="position:absolute;left:373px;top:767.0px;line-height:20px;font-size:12.5px;color:#666;white-space:nowrap;letter-spacing:-0.1px;">2023年08月06日 12:29:27</div>
<div style="position:absolute;left:574px;top:767.0px;line-height:20px;font-size:12.5px;color:#666;white-space:nowrap;">Antonia1027</div>
<div style="position:absolute;left:725px;top:767.0px;line-height:20px;font-size:12.5px;color:#666;white-space:nowrap;">Antonia1027</div>
<div style="position:absolute;left:876px;top:767.0px;line-height:20px;font-size:12.5px;color:#666;white-space:nowrap;">VIP1</div>
<div style="position:absolute;left:937px;top:767.0px;line-height:20px;font-size:12.5px;color:#666;white-space:nowrap;">100</div>
<div style="position:absolute;left:1018px;top:767.0px;line-height:20px;font-size:12.5px;color:#666;white-space:nowrap;">35</div>
<div style="position:absolute;left:1174px;top:767.0px;line-height:20px;font-size:12.5px;color:#666;white-space:nowrap;">1458.16</div>
<div style="position:absolute;left:1255px;top:767.0px;line-height:20px;font-size:12.5px;color:#666;white-space:nowrap;">0.00</div>
<div style="position:absolute;left:1336px;top:767.0px;line-height:20px;font-size:12.5px;color:#666;white-space:nowrap;">223.16</div>
<div style="position:absolute;left:1417px;top:767.0px;line-height:20px;font-size:12.5px;color:#666;white-space:nowrap;">Kumar</div>
<div style="position:absolute;left:1538px;top:767.0px;line-height:20px;font-size:12.5px;color:#666;white-space:nowrap;">DL74BG</div>
<div style="position:absolute;left:1750px;top:767px;width:34px;height:22px;background:#1E9FFF;border-radius:2px;"></div>
<div style="position:absolute;left:1750.0px;top:768.0px;width:34px;text-align:center;line-height:20px;font-size:12px;color:#fff;white-space:nowrap;">连单</div>
<div style="position:absolute;left:1794px;top:766.0px;line-height:20px;font-size:12px;color:#666;white-space:nowrap;">...</div>
<div style="position:absolute;left:247px;top:819px;width:18px;height:18px;background:#fff;border:1px solid #d2d2d2;border-radius:2px;"></div>
<div style="position:absolute;left:292px;top:818.0px;line-height:20px;font-size:12.5px;color:#666;white-space:nowrap;">4166</div>
<div style="position:absolute;left:373px;top:818.0px;line-height:20px;font-size:12.5px;color:#666;white-space:nowrap;letter-spacing:-0.1px;">2023年08月06日 11:21:06</div>
<div style="position:absolute;left:574px;top:818.0px;line-height:20px;font-size:12.5px;color:#666;white-space:nowrap;">+4747611027</div>
<div style="position:absolute;left:725px;top:818.0px;line-height:20px;font-size:12.5px;color:#666;white-space:nowrap;">Kumar</div>
<div style="position:absolute;left:876px;top:818.0px;line-height:20px;font-size:12.5px;color:#666;white-space:nowrap;">VIP1</div>
<div style="position:absolute;left:937px;top:818.0px;line-height:20px;font-size:12.5px;color:#666;white-space:nowrap;">100</div>
<div style="position:absolute;left:1018px;top:818.0px;line-height:20px;font-size:12.5px;color:#666;white-space:nowrap;">26</div>
<div style="position:absolute;left:1174px;top:818.0px;line-height:20px;font-size:12.5px;color:#666;white-space:nowrap;">-29.97</div>
<div style="position:absolute;left:1255px;top:818.0px;line-height:20px;font-size:12.5px;color:#666;white-space:nowrap;">67.03</div>
<div style="position:absolute;left:1336px;top:818.0px;line-height:20px;font-size:12.5px;color:#666;white-space:nowrap;">6.2</div>
<div style="position:absolute;left:1417px;top:818.0px;line-height:20px;font-size:12.5px;color:#666;white-space:nowrap;">哲</div>
<div style="position:absolute;left:1538px;top:818.0px;line-height:20px;font-size:12.5px;color:#666;white-space:nowrap;">26BRP5</div>
<div style="position:absolute;left:1750px;top:818px;width:34px;height:22px;background:#1E9FFF;border-radius:2px;"></div>
<div style="position:absolute;left:1750.0px;top:819.0px;width:34px;text-align:center;line-height:20px;font-size:12px;color:#fff;white-space:nowrap;">连单</div>
<div style="position:absolute;left:1794px;top:817.0px;line-height:20px;font-size:12px;color:#666;white-space:nowrap;">...</div>
<div style="position:absolute;left:247px;top:870px;width:18px;height:18px;background:#fff;border:1px solid #d2d2d2;border-radius:2px;"></div>
<div style="position:absolute;left:292px;top:869.0px;line-height:20px;font-size:12.5px;color:#666;white-space:nowrap;">4165</div>
<div style="position:absolute;left:373px;top:869.0px;line-height:20px;font-size:12.5px;color:#666;white-space:nowrap;letter-spacing:-0.1px;">2023年08月05日 19:31:21</div>
<div style="position:absolute;left:574px;top:869.0px;line-height:20px;font-size:12.5px;color:#666;white-space:nowrap;">0737276576</div>
<div style="position:absolute;left:725px;top:869.0px;line-height:20px;font-size:12.5px;color:#666;white-space:nowrap;">Mal0uni</div>
<div style="position:absolute;left:876px;top:869.0px;line-height:20px;font-size:12.5px;color:#666;white-space:nowrap;">VIP1</div>
<div style="position:absolute;left:937px;top:869.0px;line-height:20px;font-size:12.5px;color:#666;white-space:nowrap;">100</div>
<div style="position:absolute;left:1018px;top:869.0px;line-height:20px;font-size:12.5px;color:#666;white-space:nowrap;">0</div>
<div style="position:absolute;left:1174px;top:869.0px;line-height:20px;font-size:12.5px;color:#666;white-space:nowrap;">5</div>
<div style="position:absolute;left:1255px;top:869.0px;line-height:20px;font-size:12.5px;color:#666;white-space:nowrap;">0.00</div>
<div style="position:absolute;left:1336px;top:869.0px;line-height:20px;font-size:12.5px;color:#666;white-space:nowrap;">0</div>
<div style="position:absolute;left:1417px;top:869.0px;line-height:20px;font-size:12.5px;color:#666;white-space:nowrap;">XilaO</div>
<div style="position:absolute;left:1538px;top:869.0px;line-height:20px;font-size:12.5px;color:#666;white-space:nowrap;">NDLRPF</div>
<div style="position:absolute;left:1750px;top:869px;width:34px;height:22px;background:#1E9FFF;border-radius:2px;"></div>
<div style="position:absolute;left:1750.0px;top:870.0px;width:34px;text-align:center;line-height:20px;font-size:12px;color:#fff;white-space:nowrap;">连单</div>
<div style="position:absolute;left:1794px;top:868.0px;line-height:20px;font-size:12px;color:#666;white-space:nowrap;">...</div>
<div style="position:absolute;left:1855px;top:343px;width:26px;height:50px;background:#fff;border-left:1px solid #e6e6e6;"></div>
<svg style="position:absolute;left:1861px;top:365px;" width="15" height="9" viewBox="0 0 15 9"><path d="M1 1 L7.5 7.5 L14 1" fill="none" stroke="#999" stroke-width="1.2"/></svg>
<div style="position:absolute;left:1131px;top:292px;width:749px;height:51px;background:#fff;border-left:1px solid #e6e6e6;box-shadow:1px 3px 6px rgba(0,0,0,.12);"></div>
<div style="position:absolute;left:1877px;top:303px;width:3px;height:40px;background:#d6d6d6;"></div>
<div style="position:absolute;left:1157px;top:307px;width:34px;height:22px;background:#1E9FFF;border-radius:2px;"></div>
<div style="position:absolute;left:1152.0px;top:308.0px;width:44px;text-align:center;line-height:20px;font-size:12px;color:#fff;white-space:nowrap;">连单</div>
<div style="position:absolute;left:1201px;top:307px;width:82px;height:22px;background:#FFB800;border-radius:2px;"></div>
<div style="position:absolute;left:1196.0px;top:308.0px;width:92px;text-align:center;line-height:20px;font-size:12px;color:#fff;white-space:nowrap;">重置抢单数量</div>
<div style="position:absolute;left:1293px;top:307px;width:34px;height:22px;background:#FF0000;border-radius:2px;"></div>
<div style="position:absolute;left:1288.0px;top:308.0px;width:44px;text-align:center;line-height:20px;font-size:12px;color:#fff;white-space:nowrap;">余额</div>
<div style="position:absolute;left:1337px;top:307px;width:34px;height:22px;background:#009688;border-radius:2px;"></div>
<div style="position:absolute;left:1332.0px;top:308.0px;width:44px;text-align:center;line-height:20px;font-size:12px;color:#fff;white-space:nowrap;">编辑</div>
<div style="position:absolute;left:1381px;top:307px;width:70px;height:22px;background:#009688;border-radius:2px;"></div>
<div style="position:absolute;left:1376.0px;top:308.0px;width:80px;text-align:center;line-height:20px;font-size:12px;color:#fff;white-space:nowrap;">银行卡信息</div>
<div style="position:absolute;left:1461px;top:307px;width:65px;height:22px;background:#009688;border-radius:2px;"></div>
<div style="position:absolute;left:1456.0px;top:308.0px;width:75px;text-align:center;line-height:20px;font-size:12px;color:#fff;white-space:nowrap;">USDT信息</div>
<div style="position:absolute;left:1536px;top:307px;width:58px;height:22px;background:#FF5722;border-radius:2px;"></div>
<div style="position:absolute;left:1531.0px;top:308.0px;width:68px;text-align:center;line-height:20px;font-size:12px;color:#fff;white-space:nowrap;">查看团队</div>
<div style="position:absolute;left:1604px;top:307px;width:34px;height:22px;background:#1E9FFF;border-radius:2px;"></div>
<div style="position:absolute;left:1599.0px;top:308.0px;width:44px;text-align:center;line-height:20px;font-size:12px;color:#fff;white-space:nowrap;">账变</div>
<div style="position:absolute;left:1648px;top:307px;width:34px;height:22px;background:#FF0000;border-radius:2px;"></div>
<div style="position:absolute;left:1643.0px;top:308.0px;width:44px;text-align:center;line-height:20px;font-size:12px;color:#fff;white-space:nowrap;">禁用</div>
<div style="position:absolute;left:1692px;top:307px;width:58px;height:22px;background:#FF0000;border-radius:2px;"></div>
<div style="position:absolute;left:1687.0px;top:308.0px;width:68px;text-align:center;line-height:20px;font-size:12px;color:#fff;white-space:nowrap;">禁止抢单</div>
<div style="position:absolute;left:1760px;top:307px;width:58px;height:22px;background:#FF0000;border-radius:2px;"></div>
<div style="position:absolute;left:1755.0px;top:308.0px;width:68px;text-align:center;line-height:20px;font-size:12px;color:#fff;white-space:nowrap;">禁止提现</div>
<div style="position:absolute;left:1828px;top:307px;width:34px;height:22px;background:#FF0000;border-radius:2px;"></div>
<div style="position:absolute;left:1823.0px;top:308.0px;width:44px;text-align:center;line-height:20px;font-size:12px;color:#fff;white-space:nowrap;">删除</div>
<div style="position:absolute;left:1858px;top:278px;width:26px;height:26px;background:#666;border-radius:50%;"></div>
<svg style="position:absolute;left:1865px;top:285px;" width="12" height="12" viewBox="0 0 12 12"><path d="M1 1 L11 11 M11 1 L1 11" stroke="#fff" stroke-width="1.3"/></svg>
<svg style="position:absolute;left:0;top:0;" width="600" height="600" viewBox="0 0 600 600">
<defs>
<path id="arcTop" d="M 262 337 m -106 0 a 106 106 0 1 1 212 0 a 106 106 0 1 1 -212 0"/>
<path id="arcBot" d="M 262 337 m -132 0 a 132 132 0 1 0 264 0"/>
</defs>
<circle cx="262" cy="337" r="139.5" fill="none" stroke="#ff0000" stroke-width="5"/>
<text x="158.77" y="366.99" transform="rotate(253.80 158.77 366.99)" text-anchor="middle" font-family="Liberation Sans" font-weight="bold" font-size="22" fill="#ff0000" stroke="#ff0000" stroke-width="0.6">w</text><text x="154.63" y="342.21" transform="rotate(267.22 154.63 342.21)" text-anchor="middle" font-family="Liberation Sans" font-weight="bold" font-size="22" fill="#ff0000" stroke="#ff0000" stroke-width="0.6">w</text><text x="156.35" y="317.15" transform="rotate(280.64 156.35 317.15)" text-anchor="middle" font-family="Liberation Sans" font-weight="bold" font-size="22" fill="#ff0000" stroke="#ff0000" stroke-width="0.6">w</text><text x="163.84" y="293.17" transform="rotate(294.06 163.84 293.17)" text-anchor="middle" font-family="Liberation Sans" font-weight="bold" font-size="22" fill="#ff0000" stroke="#ff0000" stroke-width="0.6">.</text><text x="176.69" y="271.59" transform="rotate(307.48 176.69 271.59)" text-anchor="middle" font-family="Liberation Sans" font-weight="bold" font-size="22" fill="#ff0000" stroke="#ff0000" stroke-width="0.6">h</text><text x="194.20" y="253.58" transform="rotate(320.90 194.20 253.58)" text-anchor="middle" font-family="Liberation Sans" font-weight="bold" font-size="22" fill="#ff0000" stroke="#ff0000" stroke-width="0.6">a</text><text x="215.42" y="240.12" transform="rotate(334.32 215.42 240.12)" text-anchor="middle" font-family="Liberation Sans" font-weight="bold" font-size="22" fill="#ff0000" stroke="#ff0000" stroke-width="0.6">i</text><text x="239.17" y="231.95" transform="rotate(347.74 239.17 231.95)" text-anchor="middle" font-family="Liberation Sans" font-weight="bold" font-size="22" fill="#ff0000" stroke="#ff0000" stroke-width="0.6">w</text><text x="264.18" y="229.52" transform="rotate(361.16 264.18 229.52)" text-anchor="middle" font-family="Liberation Sans" font-weight="bold" font-size="22" fill="#ff0000" stroke="#ff0000" stroke-width="0.6">a</text><text x="289.06" y="232.96" transform="rotate(374.58 289.06 232.96)" text-anchor="middle" font-family="Liberation Sans" font-weight="bold" font-size="22" fill="#ff0000" stroke="#ff0000" stroke-width="0.6">i</text><text x="312.47" y="242.08" transform="rotate(388.00 312.47 242.08)" text-anchor="middle" font-family="Liberation Sans" font-weight="bold" font-size="22" fill="#ff0000" stroke="#ff0000" stroke-width="0.6">y</text><text x="333.12" y="256.39" transform="rotate(401.42 333.12 256.39)" text-anchor="middle" font-family="Liberation Sans" font-weight="bold" font-size="22" fill="#ff0000" stroke="#ff0000" stroke-width="0.6">m</text><text x="349.89" y="275.09" transform="rotate(414.84 349.89 275.09)" text-anchor="middle" font-family="Liberation Sans" font-weight="bold" font-size="22" fill="#ff0000" stroke="#ff0000" stroke-width="0.6">.</text><text x="361.85" y="297.18" transform="rotate(428.26 361.85 297.18)" text-anchor="middle" font-family="Liberation Sans" font-weight="bold" font-size="22" fill="#ff0000" stroke="#ff0000" stroke-width="0.6">c</text><text x="368.37" y="321.44" transform="rotate(441.68 368.37 321.44)" text-anchor="middle" font-family="Liberation Sans" font-weight="bold" font-size="22" fill="#ff0000" stroke="#ff0000" stroke-width="0.6">o</text><text x="369.07" y="346.56" transform="rotate(455.10 369.07 346.56)" text-anchor="middle" font-family="Liberation Sans" font-weight="bold" font-size="22" fill="#ff0000" stroke="#ff0000" stroke-width="0.6">m</text><text x="183.16" y="441.62" transform="rotate(37.00 183.16 441.62)" text-anchor="middle" font-family="Liberation Sans" font-size="14" fill="#ff0000" stroke="#ff0000" stroke-width="0.3">h</text><text x="195.75" y="450.01" transform="rotate(30.38 195.75 450.01)" text-anchor="middle" font-family="Liberation Sans" font-size="14" fill="#ff0000" stroke="#ff0000" stroke-width="0.3">a</text><text x="209.22" y="456.90" transform="rotate(23.76 209.22 456.90)" text-anchor="middle" font-family="Liberation Sans" font-size="14" fill="#ff0000" stroke="#ff0000" stroke-width="0.3">i</text><text x="223.39" y="462.18" transform="rotate(17.14 223.39 462.18)" text-anchor="middle" font-family="Liberation Sans" font-size="14" fill="#ff0000" stroke="#ff0000" stroke-width="0.3">w</text><text x="238.08" y="465.80" transform="rotate(10.52 238.08 465.80)" text-anchor="middle" font-family="Liberation Sans" font-size="14" fill="#ff0000" stroke="#ff0000" stroke-width="0.3">a</text><text x="253.09" y="467.70" transform="rotate(3.90 253.09 467.70)" text-anchor="middle" font-family="Liberation Sans" font-size="14" fill="#ff0000" stroke="#ff0000" stroke-width="0.3">i</text><text x="268.22" y="467.85" transform="rotate(-2.72 268.22 467.85)" text-anchor="middle" font-family="Liberation Sans" font-size="14" fill="#ff0000" stroke="#ff0000" stroke-width="0.3">y</text><text x="283.26" y="466.26" transform="rotate(-9.34 283.26 466.26)" text-anchor="middle" font-family="Liberation Sans" font-size="14" fill="#ff0000" stroke="#ff0000" stroke-width="0.3">m</text><text x="298.02" y="462.95" transform="rotate(-15.96 298.02 462.95)" text-anchor="middle" font-family="Liberation Sans" font-size="14" fill="#ff0000" stroke="#ff0000" stroke-width="0.3">.</text><text x="312.30" y="457.96" transform="rotate(-22.58 312.30 457.96)" text-anchor="middle" font-family="Liberation Sans" font-size="14" fill="#ff0000" stroke="#ff0000" stroke-width="0.3">c</text><text x="325.91" y="451.35" transform="rotate(-29.20 325.91 451.35)" text-anchor="middle" font-family="Liberation Sans" font-size="14" fill="#ff0000" stroke="#ff0000" stroke-width="0.3">o</text><text x="338.67" y="443.22" transform="rotate(-35.82 338.67 443.22)" text-anchor="middle" font-family="Liberation Sans" font-size="14" fill="#ff0000" stroke="#ff0000" stroke-width="0.3">m</text><text x="0" y="0" transform="translate(169.1 417.4) scale(0.76 1)" text-anchor="middle" font-family="Liberation Sans" font-weight="bold" font-size="28" fill="#ff0000" stroke="#ff0000" stroke-width="0.5">h</text><text x="0" y="0" transform="translate(185.9 417.4) scale(0.76 1)" text-anchor="middle" font-family="Liberation Sans" font-weight="bold" font-size="28" fill="#ff0000" stroke="#ff0000" stroke-width="0.5">a</text><text x="0" y="0" transform="translate(203.6 417.4) scale(0.76 1)" text-anchor="middle" font-family="Liberation Sans" font-weight="bold" font-size="28" fill="#ff0000" stroke="#ff0000" stroke-width="0.5">i</text><text x="0" y="0" transform="translate(219.1 417.4) scale(0.76 1)" text-anchor="middle" font-family="Liberation Sans" font-weight="bold" font-size="28" fill="#ff0000" stroke="#ff0000" stroke-width="0.5">w</text><text x="0" y="0" transform="translate(239.8 417.4) scale(0.76 1)" text-anchor="middle" font-family="Liberation Sans" font-weight="bold" font-size="28" fill="#ff0000" stroke="#ff0000" stroke-width="0.5">a</text><text x="0" y="0" transform="translate(255.2 417.4) scale(0.76 1)" text-anchor="middle" font-family="Liberation Sans" font-weight="bold" font-size="28" fill="#ff0000" stroke="#ff0000" stroke-width="0.5">i</text><text x="0" y="0" transform="translate(270 417.4) scale(0.76 1)" text-anchor="middle" font-family="Liberation Sans" font-weight="bold" font-size="28" fill="#ff0000" stroke="#ff0000" stroke-width="0.5">y</text><text x="0" y="0" transform="translate(287 417.4) scale(0.76 1)" text-anchor="middle" font-family="Liberation Sans" font-weight="bold" font-size="28" fill="#ff0000" stroke="#ff0000" stroke-width="0.5">m</text><text x="0" y="0" transform="translate(301.8 417.4) scale(0.76 1)" text-anchor="middle" font-family="Liberation Sans" font-weight="bold" font-size="28" fill="#ff0000" stroke="#ff0000" stroke-width="0.5">.</text><text x="0" y="0" transform="translate(318.6 417.4) scale(0.76 1)" text-anchor="middle" font-family="Liberation Sans" font-weight="bold" font-size="28" fill="#ff0000" stroke="#ff0000" stroke-width="0.5">c</text><text x="0" y="0" transform="translate(339 417.4) scale(0.76 1)" text-anchor="middle" font-family="Liberation Sans" font-weight="bold" font-size="28" fill="#ff0000" stroke="#ff0000" stroke-width="0.5">o</text><text x="0" y="0" transform="translate(357.4 417.4) scale(0.76 1)" text-anchor="middle" font-family="Liberation Sans" font-weight="bold" font-size="28" fill="#ff0000" stroke="#ff0000" stroke-width="0.5">m</text><text x="201" y="351" text-anchor="middle" font-family="Liberation Serif" font-size="37" fill="#ff0000" stroke="#ff0000" stroke-width="0.6">海</text><text x="243" y="351" text-anchor="middle" font-family="Liberation Serif" font-size="37" fill="#ff0000" stroke="#ff0000" stroke-width="0.6">外</text><text x="284.8" y="351" text-anchor="middle" font-family="Liberation Serif" font-size="37" fill="#ff0000" stroke="#ff0000" stroke-width="0.6">源</text><text x="324.5" y="351" text-anchor="middle" font-family="Liberation Serif" font-size="37" fill="#ff0000" stroke="#ff0000" stroke-width="0.6">码</text></svg>
<div style="position:absolute;left:1917px;top:51px;width:3px;height:549px;background:#666;"></div>
<div style="position:absolute;left:1917px;top:600px;width:3px;height:313px;background:#ccc;"></div>
</body></html>
